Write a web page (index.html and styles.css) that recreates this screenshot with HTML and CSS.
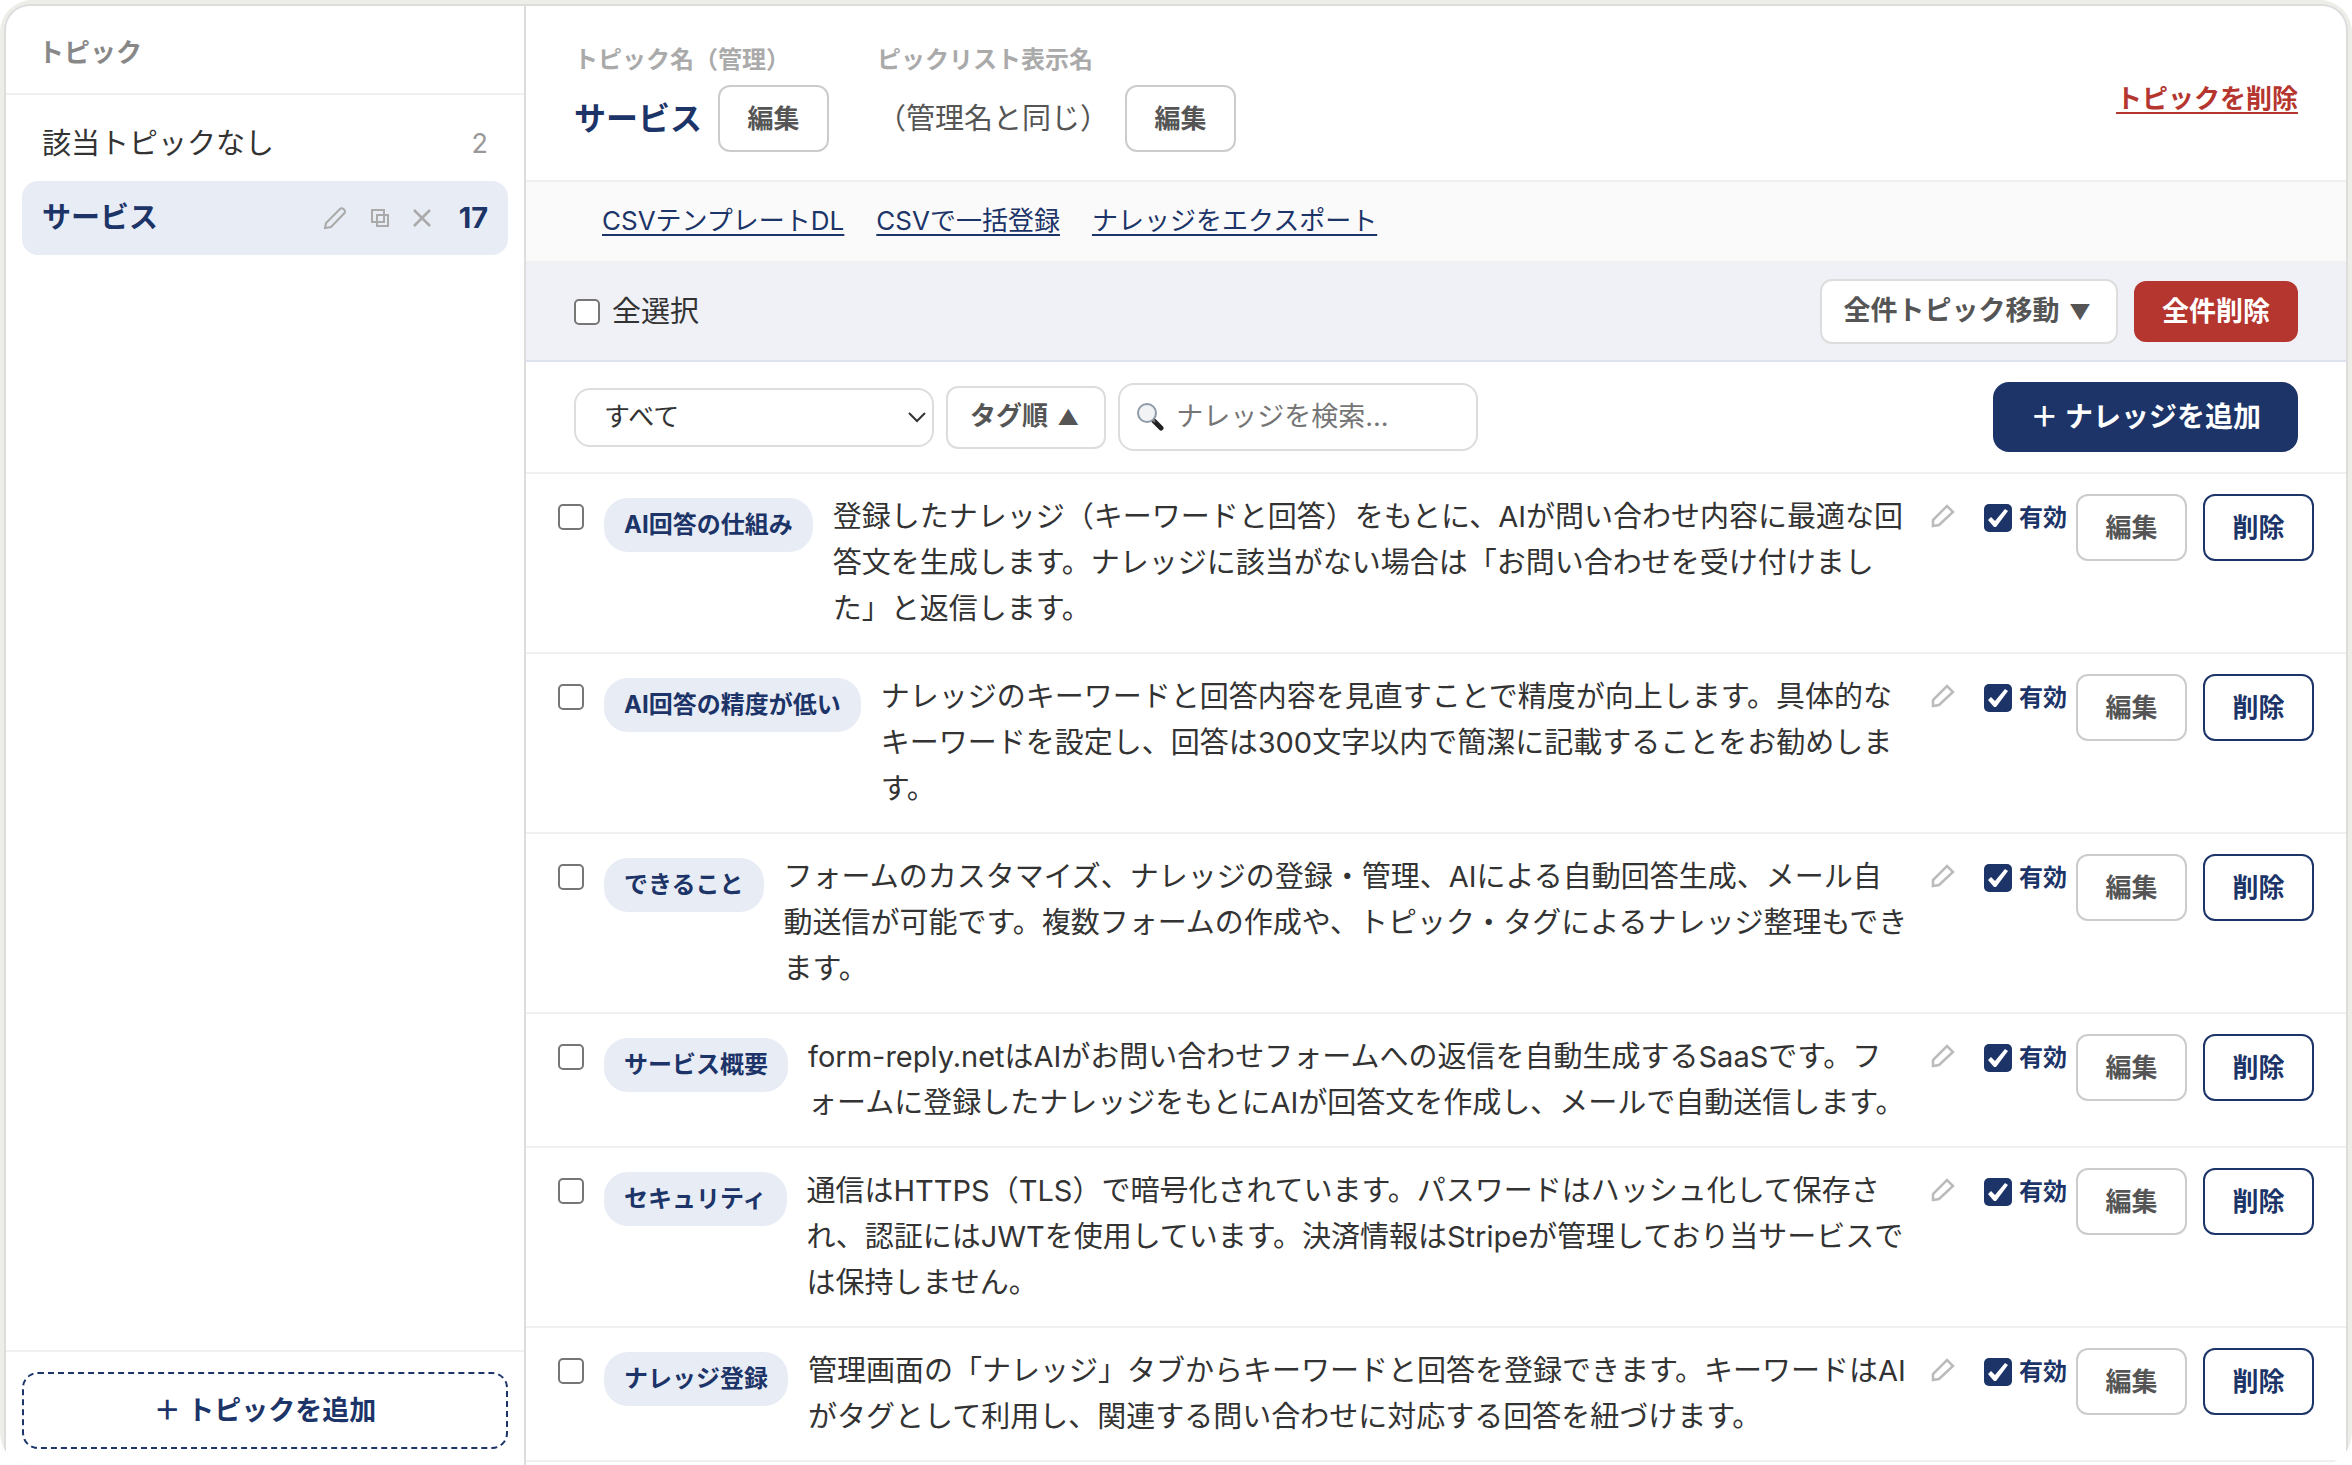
FILE: index.html
```html
<!DOCTYPE html>
<html lang="ja">
<head>
<meta charset="utf-8">
<meta name="viewport" content="width=device-width, initial-scale=1">
<title>ナレッジ管理</title>
<link rel="stylesheet" href="styles.css">
</head>
<body>
<svg class="symbols" aria-hidden="true">
  <symbol id="pencil" viewBox="0 0 24 24"><path d="M2 22V16L16 2 22 8 8 21Z"/></symbol>
  <symbol id="pencil-round" viewBox="0 0 24 24"><path d="M2 22 3 17 17 3Q18.500 1.500 20.500 3L21.500 4Q22.500 5.500 21.500 7L8 21Z"/></symbol>
</svg>
<div class="shell">
<div class="card">
  <aside class="sidebar">
    <h2 class="sidebar-title">トピック</h2>
    <ul class="topics">
      <li class="topic"><span class="topic-name">該当トピックなし</span><span class="count">2</span></li>
      <li class="topic active">
        <span class="topic-name">サービス</span>
        <button class="icon" type="button" aria-label="名前を編集"><svg class="pencil"><use href="#pencil-round"/></svg></button>
        <button class="icon" type="button" aria-label="複製"><svg class="copy" viewBox="0 0 18 18"><path d="M1 1h12v12H1zM6 6h11v11H6z"/></svg></button>
        <button class="icon" type="button" aria-label="削除"><svg class="cross" viewBox="0 0 18 18"><path d="M1 1 17 17M17 1 1 17"/></svg></button>
        <span class="count">17</span>
      </li>
    </ul>
    <div class="sidebar-foot"><button class="add-topic" type="button">＋ トピックを追加</button></div>
  </aside>
  <main class="main">
    <header class="head">
      <div class="field">
        <span class="field-label">トピック名（管理）</span>
        <div class="field-row"><h1 class="topic-title">サービス</h1><button class="btn" type="button">編集</button></div>
      </div>
      <div class="field">
        <span class="field-label">ピックリスト表示名</span>
        <div class="field-row"><span class="field-value">（管理名と同じ）</span><button class="btn" type="button">編集</button></div>
      </div>
      <a class="delete-topic" href="#">トピックを削除</a>
    </header>
    <nav class="links">
      <a href="#">CSVテンプレートDL</a><a href="#">CSVで一括登録</a><a href="#">ナレッジをエクスポート</a>
    </nav>
    <div class="bulk">
      <label class="select-all"><input class="check" type="checkbox">全選択</label>
      <button class="move" type="button">全件トピック移動 <span class="caret">▼</span></button>
      <button class="delete-all" type="button">全件削除</button>
    </div>
    <div class="filters">
      <div class="select-wrap">
        <select class="tag-filter" aria-label="タグ"><option>すべて</option></select>
        <svg class="chevron" viewBox="0 0 18 12"><path d="M1 2 9 10 17 2"/></svg>
      </div>
      <button class="sort" type="button">タグ順 <span class="caret">▲</span></button>
      <label class="search">
        <svg class="lens" viewBox="0 0 28 28" aria-hidden="true">
          <path d="M18 18 25 25" stroke="#222" stroke-width="5" stroke-linecap="round"/>
          <path d="M15 15 19 19" stroke="#777" stroke-width="2"/>
          <circle cx="11" cy="10" r="9" fill="#f2f3f5" stroke="#8d9aa8" stroke-width="2"/>
        </svg>
        <input class="search-input" type="text" placeholder="ナレッジを検索..." aria-label="ナレッジを検索">
      </label>
      <button class="add" type="button">＋ ナレッジを追加</button>
    </div>
    <ul class="rows">
      <li class="row">
        <input class="check" type="checkbox" aria-label="選択"><span class="tag">AI回答の仕組み</span>
        <p class="answer">登録したナレッジ（キーワードと回答）をもとに、AIが問い合わせ内容に最適な回答文を生成します。ナレッジに該当がない場合は「お問い合わせを受け付けました」と返信します。</p>
        <button class="icon row-icon" type="button" aria-label="編集"><svg class="pencil"><use href="#pencil"/></svg></button>
        <label class="enabled"><input class="check" type="checkbox" checked>有効</label>
        <button class="btn" type="button">編集</button><button class="btn navy" type="button">削除</button>
      </li>
      <li class="row">
        <input class="check" type="checkbox" aria-label="選択"><span class="tag">AI回答の精度が低い</span>
        <p class="answer">ナレッジのキーワードと回答内容を見直すことで精度が向上します。具体的なキーワードを設定し、回答は300文字以内で簡潔に記載することをお勧めします。</p>
        <button class="icon row-icon" type="button" aria-label="編集"><svg class="pencil"><use href="#pencil"/></svg></button>
        <label class="enabled"><input class="check" type="checkbox" checked>有効</label>
        <button class="btn" type="button">編集</button><button class="btn navy" type="button">削除</button>
      </li>
      <li class="row">
        <input class="check" type="checkbox" aria-label="選択"><span class="tag">できること</span>
        <p class="answer">フォームのカスタマイズ、ナレッジの登録・管理、AIによる自動回答生成、メール自<br>動送信が可能です。複数フォームの作成や、トピック・タグによるナレッジ整理もできます。</p>
        <button class="icon row-icon" type="button" aria-label="編集"><svg class="pencil"><use href="#pencil"/></svg></button>
        <label class="enabled"><input class="check" type="checkbox" checked>有効</label>
        <button class="btn" type="button">編集</button><button class="btn navy" type="button">削除</button>
      </li>
      <li class="row">
        <input class="check" type="checkbox" aria-label="選択"><span class="tag">サービス概要</span>
        <p class="answer">form-reply.netはAIがお問い合わせフォームへの返信を自動生成するSaaSです。フ<br>ォームに登録したナレッジをもとにAIが回答文を作成し、メールで自動送信します。</p>
        <button class="icon row-icon" type="button" aria-label="編集"><svg class="pencil"><use href="#pencil"/></svg></button>
        <label class="enabled"><input class="check" type="checkbox" checked>有効</label>
        <button class="btn" type="button">編集</button><button class="btn navy" type="button">削除</button>
      </li>
      <li class="row">
        <input class="check" type="checkbox" aria-label="選択"><span class="tag">セキュリティ</span>
        <p class="answer">通信はHTTPS（TLS）で暗号化されています。パスワードはハッシュ化して保存され、認証にはJWTを使用しています。決済情報はStripeが管理しており当サービスでは保持しません。</p>
        <button class="icon row-icon" type="button" aria-label="編集"><svg class="pencil"><use href="#pencil"/></svg></button>
        <label class="enabled"><input class="check" type="checkbox" checked>有効</label>
        <button class="btn" type="button">編集</button><button class="btn navy" type="button">削除</button>
      </li>
      <li class="row">
        <input class="check" type="checkbox" aria-label="選択"><span class="tag">ナレッジ登録</span>
        <p class="answer">管理画面の「ナレッジ」タブからキーワードと回答を登録できます。キーワードはAIがタグとして利用し、関連する問い合わせに対応する回答を紐づけます。</p>
        <button class="icon row-icon" type="button" aria-label="編集"><svg class="pencil"><use href="#pencil"/></svg></button>
        <label class="enabled"><input class="check" type="checkbox" checked>有効</label>
        <button class="btn" type="button">編集</button><button class="btn navy" type="button">削除</button>
      </li>
    </ul>
  </main>
</div>
</div>
</body>
</html>
```
FILE: styles.css
```css
:root {
  --navy: #1c3468;
  --red: #b5362f;
  --tint: #e8ecf5;
  --line: #f0f0f0;
  --edge: #dddddd;
}

*, *::before { box-sizing: border-box; }

body {
  margin: 0;
  background: #fff;
  color: #333;
  font-family: Inter, "Noto Sans CJK JP", sans-serif;
  font-size: 29px;
  line-height: 46px;
}

h1, h2, p, ul { margin: 0; padding: 0; }
ul { list-style: none; }
button, input, select { margin: 0; font: inherit; color: inherit; }
button { cursor: pointer; white-space: nowrap; }
.symbols { display: none; }

.shell {
  height: 100vh;
  padding: 4px 4px 0;
  overflow: hidden;
  border-radius: 32px;
  background: #eeeee9;
}

.card {
  display: flex;
  height: 100%;
  overflow: hidden;
  border: 2px solid var(--edge);
  border-bottom: 0;
  border-radius: 26px 26px 0 0;
  background: #fff;
}

/* Sidebar */
.sidebar {
  display: flex;
  flex: none;
  flex-direction: column;
  width: 520px;
  border-right: 2px solid var(--edge);
}

.sidebar-title {
  padding: 24px 32px 17px;
  border-bottom: 2px solid var(--line);
  color: #888;
  font-size: 26px;
}

.topics { flex: 1; padding: 12px 16px; }

.topic {
  display: flex;
  align-items: center;
  height: 74px;
  padding: 0 20px;
  border-radius: 16px;
}

.topic-name { flex: 1; }
.count { color: #999; font-size: 27px; }
.topic.active { background: var(--tint); color: var(--navy); font-weight: 700; }
.active .count { margin-left: 4px; color: inherit; font-size: 29px; }

.icon {
  display: flex;
  padding: 0;
  border: 0;
  background: none;
}

.icon svg { fill: none; stroke: #aaa; stroke-width: 2; }
.topic .icon { margin-right: 24px; }
.pencil { width: 24px; height: 24px; }
.copy, .cross { width: 18px; height: 18px; }
.icon .cross { stroke-width: 2.5; }

.sidebar-foot { padding: 20px 16px 16px; border-top: 2px solid var(--line); }

.add-topic {
  width: 100%;
  height: 77px;
  border: 2px dashed var(--navy);
  border-radius: 16px;
  background: #fff;
  color: var(--navy);
  font-size: 27px;
  font-weight: 700;
}

/* Topic header */
.main { flex: 1; min-width: 0; }

.head {
  display: flex;
  align-items: center;
  gap: 48px;
  padding: 28px 48px;
  border-bottom: 2px solid var(--line);
}

.field-label {
  display: block;
  color: #aaa;
  font-size: 24px;
  font-weight: 700;
  line-height: 51px;
}

.field-row { display: flex; align-items: center; gap: 16px; }
.topic-title { color: var(--navy); font-size: 32px; }
.field-value { color: #555; }

.btn {
  flex: none;
  width: 111px;
  height: 67px;
  padding: 0;
  border: 2px solid #ccc;
  border-radius: 12px;
  background: #fff;
  color: #555;
  font-size: 26px;
  font-weight: 700;
}

.btn.navy { border-color: var(--navy); color: var(--navy); }

.delete-topic {
  margin: 12px 0 0 auto;
  color: var(--red);
  font-size: 26px;
  font-weight: 700;
}

.links {
  display: flex;
  gap: 32px;
  padding: 16px 76px 17px;
  border-bottom: 2px solid var(--line);
  background: #fafafa;
  font-size: 26px;
}

.links a { color: var(--navy); }
.links a, .delete-topic { text-decoration-thickness: 2px; text-underline-offset: 4px; }

/* Bulk actions */
.bulk {
  display: flex;
  align-items: center;
  gap: 16px;
  padding: 16px 48px;
  border-bottom: 2px solid #dde2ee;
  background: #f0f1f7;
}

.select-all { display: flex; flex: 1; align-items: center; gap: 12px; }

.check {
  flex: none;
  width: 26px;
  height: 26px;
  border: 2px solid #767676;
  border-radius: 5px;
  background: #fff;
  appearance: none;
}

.check:checked { width: 28px; height: 28px; border: 0; background: var(--navy); }

.check:checked::before {
  display: block;
  width: 28px;
  height: 28px;
  background: #fff;
  clip-path: polygon(4px 16px, 7px 13px, 11px 17px, 21px 5px, 24px 7px, 12px 23px, 10px 23px);
  content: "";
}

.move, .delete-all, .sort {
  border: 2px solid var(--edge);
  border-radius: 12px;
  background: #fff;
  color: #555;
  font-size: 27px;
  font-weight: 700;
}

.caret {
  display: inline-block;
  width: 28px;
  font-size: 21px;
  text-align: center;
}

.move { height: 65px; padding: 0 22px; }
.delete-all { height: 61px; padding: 0 28px; border: 0; background: var(--red); color: #fff; }

/* Filters */
.filters {
  display: flex;
  align-items: center;
  gap: 12px;
  padding: 20px 48px;
  border-bottom: 2px solid var(--line);
}

.select-wrap { display: grid; align-items: center; width: 360px; }

.tag-filter {
  grid-area: 1 / 1;
  width: 100%;
  height: 59px;
  padding: 0 28px;
  border: 2px solid var(--edge);
  border-radius: 16px;
  background: #fff;
  font-size: 26px;
  appearance: none;
}

.chevron {
  grid-area: 1 / 1;
  justify-self: end;
  width: 18px;
  height: 12px;
  margin-right: 8px;
  fill: none;
  stroke: #333;
  stroke-width: 2;
  pointer-events: none;
}

.sort { height: 63px; padding: 0 22px; font-size: 26px; }

.search {
  display: flex;
  align-items: center;
  gap: 12px;
  width: 360px;
  height: 68px;
  padding: 0 16px;
  border: 2px solid var(--edge);
  border-radius: 16px;
}

.lens { flex: none; width: 28px; height: 28px; fill: none; }

.search-input {
  flex: 1;
  min-width: 0;
  padding: 0;
  border: 0;
  outline: 0;
  background: none;
  font-size: 27px;
}

.search-input::placeholder { color: #757575; }

.add {
  height: 70px;
  margin-left: auto;
  padding: 0 37px;
  border: 0;
  border-radius: 16px;
  background: var(--navy);
  color: #fff;
  font-size: 28px;
  font-weight: 700;
}

/* Knowledge rows */
.row {
  display: flex;
  align-items: flex-start;
  padding: 20px 32px;
  border-bottom: 2px solid var(--line);
}

.row > .check { margin: 10px 20px 0 0; }

.tag {
  flex: none;
  margin: 4px 20px 0 0;
  padding: 4px 20px;
  border-radius: 24px;
  background: var(--tint);
  color: var(--navy);
  font-size: 24px;
  font-weight: 700;
}

.answer { flex: 1; min-width: 0; }
.row-icon { margin: 10px 29px 0 14px; }
.icon.row-icon svg { stroke: #bbb; stroke-width: 2.5; }

.enabled {
  display: flex;
  align-items: center;
  gap: 7px;
  height: 48px;
  margin-right: 9px;
  color: var(--navy);
  font-size: 24px;
  font-weight: 700;
}

.btn + .btn { margin-left: 16px; }
```
